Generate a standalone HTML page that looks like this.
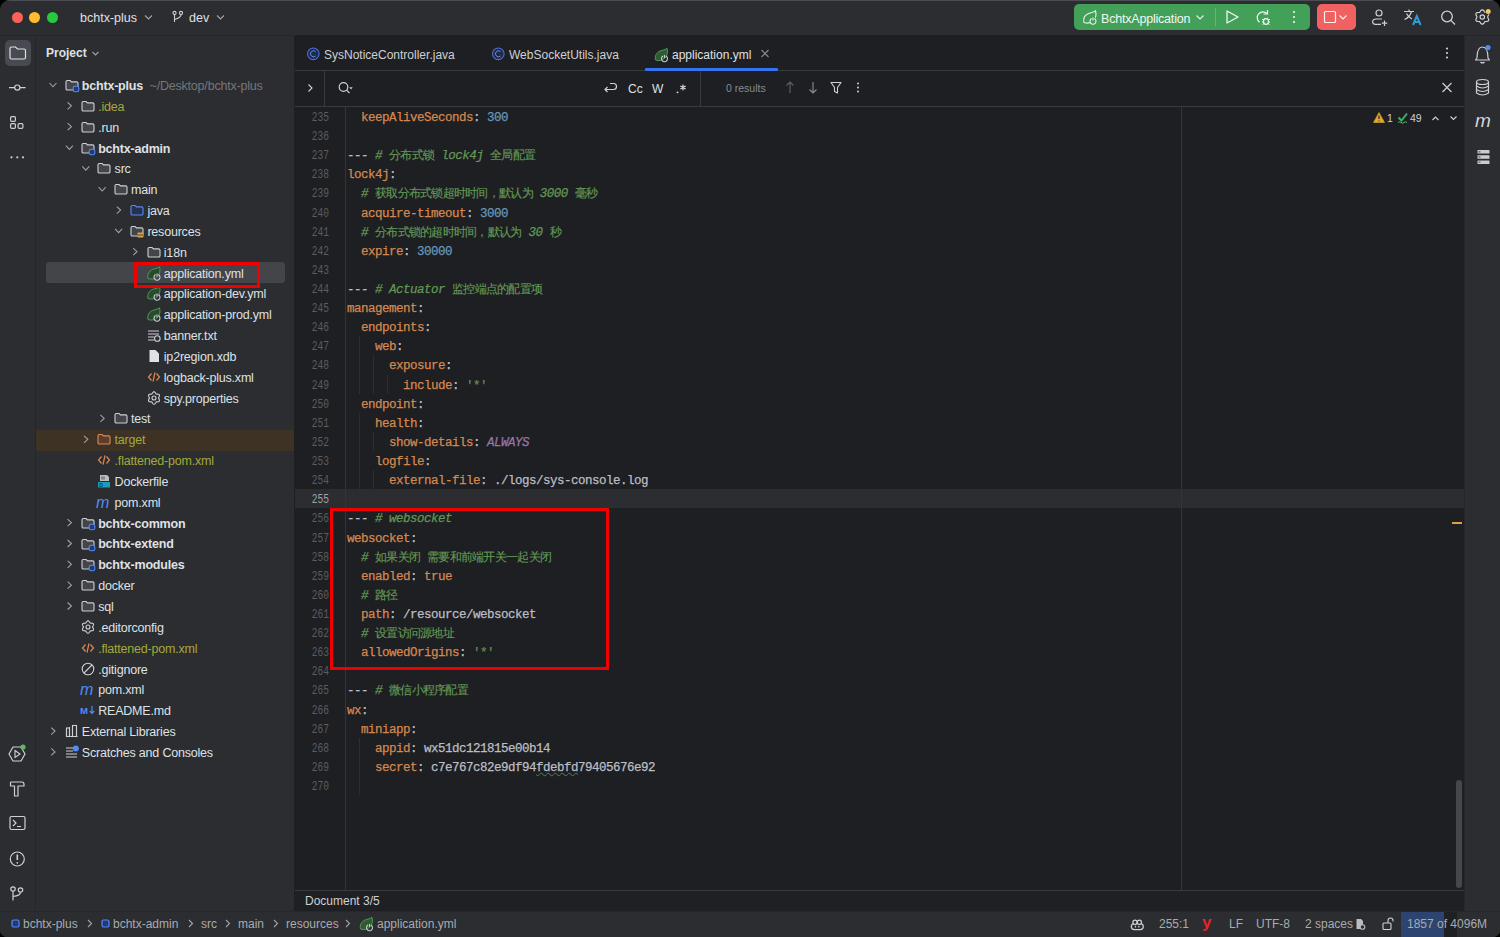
<!DOCTYPE html>
<html><head><meta charset="utf-8">
<style>
*{box-sizing:border-box;margin:0;padding:0}
html,body{width:1500px;height:937px;overflow:hidden;background:#000}
body{font-family:"Liberation Sans",sans-serif;color:#DFE1E5;font-size:13px;position:relative}
.a{position:absolute}
svg{position:absolute;overflow:visible}
#win{position:absolute;left:0;top:0;width:1500px;height:937px;background:#2B2D30;border-radius:10px 10px 7px 7px;overflow:hidden}
#title{left:0;top:0;width:1500px;height:35px;background:#2B2D30}
#lstrip{left:0;top:35px;width:36px;height:876px;background:#2B2D30;border-right:1px solid #25272A}
#proj{left:36px;top:35px;width:259px;height:876px;background:#2B2D30;border-right:1px solid #1E1F22}
#editor{left:295px;top:35px;width:1169px;height:855px;background:#1E1F22;overflow:hidden}
#docbar{left:295px;top:890px;width:1169px;height:21px;background:#1F2023;border-top:1px solid #393B40}
#rstrip{left:1464px;top:35px;width:36px;height:876px;background:#2B2D30;border-left:1px solid #25272A}
#status{left:0;top:911px;width:1500px;height:26px;background:#2B2D30;border-top:1px solid #25272A}
.ln{position:absolute;left:-66px;width:100px;text-align:right;font-family:"Liberation Mono",monospace;font-size:12px;letter-spacing:0;line-height:19.11px;color:#5A5D63;padding-top:2px;transform:scaleX(0.8);transform-origin:100% 50%}
.ln.cur{color:#A1A3AB}
.cl{position:absolute;left:52px;font-family:"Liberation Mono",monospace;font-size:12.5px;letter-spacing:-0.5px;line-height:19.11px;white-space:pre;padding-top:2px;-webkit-text-stroke:0.25px currentColor}
.zh{font-style:normal;font-size:12px;letter-spacing:-0.73px;-webkit-text-stroke:0.15px currentColor}
.it{font-style:italic}
.ul{text-decoration:underline wavy #5E7A4A;text-decoration-thickness:1px;text-underline-offset:1px}
.t{position:absolute;white-space:nowrap;line-height:16px}
.tr{position:absolute;white-space:nowrap;line-height:21px;height:21px;font-size:12.5px;letter-spacing:-0.2px;color:#DFE1E5}
.b{font-weight:bold}
</style></head><body>
<div id="win">
<div class="a" style="left:0;top:0;width:1500px;height:1px;background:#4B4D52;z-index:5"></div>
<div id="title" class="a">
  <div class="a" style="left:11.8px;top:11.5px;width:11px;height:11px;border-radius:50%;background:#FF5F57"></div>
  <div class="a" style="left:29.2px;top:11.5px;width:11px;height:11px;border-radius:50%;background:#FEBC2E"></div>
  <div class="a" style="left:46.5px;top:11.5px;width:11px;height:11px;border-radius:50%;background:#28C840"></div>
  <div class="t" style="left:80px;top:10px;font-size:12.5px;color:#DFE1E5">bchtx-plus</div>
  <svg width="1" height="1" style="left:0;top:0"><path d="M145 15.5 L148.5 19 L152 15.5" fill="none" stroke="#9FA2A8" stroke-width="1.1"/>
   <circle cx="174.5" cy="13" r="1.6" fill="none" stroke="#CED0D6" stroke-width="1.1"/><circle cx="181" cy="13" r="1.6" fill="none" stroke="#CED0D6" stroke-width="1.1"/>
   <path d="M174.5 14.6 V22 M181 14.6 Q181 18 174.5 19.5" fill="none" stroke="#CED0D6" stroke-width="1.1"/>
   <path d="M217 15.5 L220.5 19 L224 15.5" fill="none" stroke="#9FA2A8" stroke-width="1.1"/></svg>
  <div class="t" style="left:189px;top:10px;font-size:12.5px;color:#DFE1E5">dev</div>
  <div class="a" style="left:1074px;top:4px;width:236px;height:26px;border-radius:5px;background:#43A059"></div>
  <div class="a" style="left:1215px;top:8px;width:1px;height:18px;background:#68B57A"></div>
  <svg width="1" height="1" style="left:0;top:0">
   <g transform="translate(1083,10)"><path d="M1 12.5 C0 8.5 2 5 5.5 3.5 C8 2.5 10.5 2.5 12.5 0.8 C13.5 4.5 13 8 10.5 10.5 C8 13 4.5 13.8 1 12.5 Z" fill="none" stroke="#EAF4EC" stroke-width="1.1"/><circle cx="10" cy="10.5" r="3.4" fill="#43A059"/><path d="M8.6 8.6 A3 3 0 1 0 11.4 8.6" fill="none" stroke="#EAF4EC" stroke-width="1.1"/><line x1="10" y1="7.4" x2="10" y2="10.4" stroke="#EAF4EC" stroke-width="1.1"/></g>
   <path d="M1196.5 15.5 L1200 19 L1203.5 15.5" fill="none" stroke="#E6F2E8" stroke-width="1.1"/>
   <path d="M1227 11 L1238 17 L1227 23 Z" fill="none" stroke="#F2F7F3" stroke-width="1.3" stroke-linejoin="round"/>
   <path d="M1267.5 14 A5.8 5.8 0 1 0 1259.5 22.3" fill="none" stroke="#F2F7F3" stroke-width="1.2"/><path d="M1267.5 10 V14 H1263.5" fill="none" stroke="#F2F7F3" stroke-width="1.2"/>
   <ellipse cx="1266" cy="21.5" rx="2.5" ry="2.8" fill="#43A059" stroke="#F2F7F3" stroke-width="1.2"/>
   <path d="M1262 19.5 H1263.5 M1268.5 19.5 H1270 M1262 22 H1263.5 M1268.5 22 H1270 M1262.5 24.5 L1264 23.5 M1269.5 24.5 L1268 23.5 M1264.5 18 L1265.3 18.8 M1267.5 18 L1266.7 18.8" stroke="#F2F7F3" stroke-width="1"/>
   <circle cx="1294" cy="12" r="1.1" fill="#F2F7F3"/><circle cx="1294" cy="17" r="1.1" fill="#F2F7F3"/><circle cx="1294" cy="22" r="1.1" fill="#F2F7F3"/>
  </svg>
  <div class="t" style="left:1101px;top:10.5px;font-size:12.5px;color:#F2F7F3;letter-spacing:-0.2px">BchtxApplication</div>
  <div class="a" style="left:1317px;top:4px;width:39px;height:26px;border-radius:5px;background:#F06262"></div>
  <svg width="1" height="1" style="left:0;top:0">
   <rect x="1324.5" y="11.5" width="11" height="11" rx="1" fill="none" stroke="#FFF0F0" stroke-width="1.2"/>
   <path d="M1339.5 15.5 L1343 19 L1346.5 15.5" fill="none" stroke="#FFF0F0" stroke-width="1.1"/>
   <!-- person add -->
   <circle cx="1379" cy="13" r="3" fill="none" stroke="#CED0D6" stroke-width="1.2"/>
   <path d="M1382 19 H1376.5 Q1372.6 19 1372.6 21.8 Q1372.6 24.3 1375.5 24.3 H1381" fill="none" stroke="#CED0D6" stroke-width="1.2"/>
   <path d="M1384.5 20.5 V26 M1381.8 23.2 H1387.2" stroke="#CED0D6" stroke-width="1.2"/>
   <!-- translate -->
   <path d="M1404 11.5 H1414 M1409 9.5 V11.5 M1411.5 11.5 Q1410 17 1404.5 19.5 M1406.5 13.5 Q1408.5 17.5 1412 19" fill="none" stroke="#CED0D6" stroke-width="1.2"/>
   <path d="M1413 25 L1416.8 16 L1420.6 25 M1414.4 22 H1419.2" fill="none" stroke="#2F9BD6" stroke-width="2"/>
   <!-- search -->
   <circle cx="1447" cy="16.5" r="5.3" fill="none" stroke="#CED0D6" stroke-width="1.3"/><path d="M1450.9 20.4 L1455 24.5" stroke="#CED0D6" stroke-width="1.3"/>
   <!-- settings -->
   <circle cx="1482.3" cy="17" r="2.2" fill="none" stroke="#CED0D6" stroke-width="1.2"/>
   <path d="M1482.30 9.80 L1482.77 9.88 L1483.21 10.12 L1483.60 10.48 L1483.93 10.91 L1484.21 11.36 L1484.47 11.77 L1484.72 12.10 L1485.00 12.32 L1485.34 12.45 L1485.75 12.51 L1486.23 12.52 L1486.75 12.55 L1487.30 12.62 L1487.80 12.78 L1488.23 13.04 L1488.54 13.40 L1488.70 13.85 L1488.71 14.35 L1488.59 14.86 L1488.39 15.37 L1488.14 15.84 L1487.92 16.26 L1487.76 16.64 L1487.70 17.00 L1487.76 17.36 L1487.92 17.74 L1488.14 18.16 L1488.39 18.63 L1488.59 19.14 L1488.71 19.65 L1488.70 20.15 L1488.54 20.60 L1488.23 20.96 L1487.80 21.22 L1487.30 21.38 L1486.75 21.45 L1486.23 21.48 L1485.75 21.49 L1485.34 21.55 L1485.00 21.68 L1484.72 21.90 L1484.47 22.23 L1484.21 22.64 L1483.93 23.09 L1483.60 23.52 L1483.21 23.88 L1482.77 24.12 L1482.30 24.20 L1481.83 24.12 L1481.39 23.88 L1481.00 23.52 L1480.67 23.09 L1480.39 22.64 L1480.13 22.23 L1479.88 21.90 L1479.60 21.68 L1479.26 21.55 L1478.85 21.49 L1478.37 21.48 L1477.85 21.45 L1477.30 21.38 L1476.80 21.22 L1476.37 20.96 L1476.06 20.60 L1475.90 20.15 L1475.89 19.65 L1476.01 19.14 L1476.21 18.63 L1476.46 18.16 L1476.68 17.74 L1476.84 17.36 L1476.90 17.00 L1476.84 16.64 L1476.68 16.26 L1476.46 15.84 L1476.21 15.37 L1476.01 14.86 L1475.89 14.35 L1475.90 13.85 L1476.06 13.40 L1476.37 13.04 L1476.80 12.78 L1477.30 12.62 L1477.85 12.55 L1478.37 12.52 L1478.85 12.51 L1479.26 12.45 L1479.60 12.32 L1479.88 12.10 L1480.13 11.77 L1480.39 11.36 L1480.67 10.91 L1481.00 10.48 L1481.39 10.12 L1481.83 9.88 Z" fill="none" stroke="#CED0D6" stroke-width="1.2" stroke-linejoin="round"/>
   <circle cx="1488.2" cy="11.5" r="3" fill="#2B2D30"/><circle cx="1488.2" cy="11.5" r="2.5" fill="#F2C55C"/>
  </svg>
</div>
<div id="lstrip" class="a">
  <div class="a" style="left:4.5px;top:4.5px;width:26px;height:26px;border-radius:5px;background:#474A50"></div>
  <svg width="1" height="1" style="left:0;top:0">
   <path d="M10 13.5 Q10 12 11.5 12 H15.5 L17.5 14 H24 Q25.5 14 25.5 15.5 V22.5 Q25.5 24 24 24 H11.5 Q10 24 10 22.5 Z" fill="none" stroke="#DFE1E5" stroke-width="1.2"/>
   <circle cx="17.3" cy="52.6" r="2.6" fill="none" stroke="#CED0D6" stroke-width="1.2"/><path d="M9 52.6 H14.7 M19.9 52.6 H25.6" stroke="#CED0D6" stroke-width="1.2"/>
   <rect x="10.6" y="81.6" width="4.8" height="4.8" rx="1.2" fill="none" stroke="#CED0D6" stroke-width="1.2"/>
   <rect x="10.6" y="88.6" width="4.8" height="4.8" rx="1.2" fill="none" stroke="#CED0D6" stroke-width="1.2"/>
   <rect x="18.1" y="88.6" width="4.8" height="4.8" rx="1.2" fill="none" stroke="#CED0D6" stroke-width="1.2"/>
   <circle cx="11.5" cy="122.3" r="1.1" fill="#CED0D6"/><circle cx="17.3" cy="122.3" r="1.1" fill="#CED0D6"/><circle cx="23" cy="122.3" r="1.1" fill="#CED0D6"/>
   <!-- services -->
   <path d="M13 712 L21 712 L25 719 L21 726 L13 726 L9 719 Z" fill="none" stroke="#CED0D6" stroke-width="1.2" stroke-linejoin="round"/>
   <path d="M15 715.5 L20 719 L15 722.5 Z" fill="none" stroke="#CED0D6" stroke-width="1.1"/>
   <circle cx="23" cy="712" r="2.6" fill="#5FB865"/>
   <!-- build hammer -->
   <path d="M10.5 747 H22 Q24 747 24 749.5 V751 H20 M10.5 747 V751 H14.5 V761 H18 V751 H20" fill="none" stroke="#CED0D6" stroke-width="1.2" stroke-linejoin="round"/>
   <!-- terminal -->
   <rect x="10" y="781.5" width="15" height="13" rx="1.5" fill="none" stroke="#CED0D6" stroke-width="1.2"/>
   <path d="M13 785 L16 788 L13 791 M17 791.5 H21" fill="none" stroke="#CED0D6" stroke-width="1.2"/>
   <!-- problems -->
   <circle cx="17.3" cy="824" r="7" fill="none" stroke="#CED0D6" stroke-width="1.2"/><path d="M17.3 819.5 V825" stroke="#CED0D6" stroke-width="1.6"/><circle cx="17.3" cy="827.8" r="0.9" fill="#CED0D6"/>
   <!-- git -->
   <circle cx="13" cy="854" r="2.2" fill="none" stroke="#CED0D6" stroke-width="1.2"/><circle cx="20.5" cy="855" r="2.2" fill="none" stroke="#CED0D6" stroke-width="1.2"/>
   <path d="M13 856.2 V865.5 M20.5 857.2 Q20.5 860.5 13 861.5" fill="none" stroke="#CED0D6" stroke-width="1.2"/>
  </svg>
</div>
<div id="proj" class="a">
  <div class="t b" style="left:10px;top:10px;font-size:12px">Project</div>
  <svg width="1" height="1" style="left:0;top:0"><path d="M56.5 17 L59.5 20 L62.5 17" fill="none" stroke="#9FA2A8" stroke-width="1.1"/></svg>
  <div class="a" style="left:10px;top:227px;width:239px;height:21px;border-radius:3px;background:#43454A"></div>
  <div class="a" style="left:0;top:395px;width:258px;height:21px;background:#3D3223"></div>
<svg width="1" height="1" style="left:0;top:0"><path d="M13.50 48.00 L17.00 51.80 L20.50 48.00" fill="none" stroke="#9FA2A8" stroke-width="1.1"/></svg>
<svg width="14" height="14" style="left:28.5px;top:43.0px"><g transform="translate(0.5,2)"><path d="M0.5 1.8 Q0.5 0.5 1.8 0.5 H4.6 L6 1.9 H11.2 Q12.5 1.9 12.5 3.2 V8.7 Q12.5 10 11.2 10 H1.8 Q0.5 10 0.5 8.7 Z" fill="#43454A" stroke="#CED0D6" stroke-width="1.1"/></g><rect x="8.2" y="8.2" width="5.6" height="5.6" rx="1.8" fill="#233B6E" stroke="#548AF7" stroke-width="1.1"/></svg>
<div class="tr" style="left:45.8px;top:41.00px;color:#DFE1E5;font-weight:bold">bchtx-plus<span style="color:#74777E;font-weight:normal">&nbsp; ~/Desktop/bchtx-plus</span></div>
<svg width="1" height="1" style="left:0;top:0"><path d="M31.60 67.34 L35.40 70.84 L31.60 74.34" fill="none" stroke="#9FA2A8" stroke-width="1.1"/></svg>
<svg width="14" height="14" style="left:44.9px;top:63.8px"><g transform="translate(0.5,2)"><path d="M0.5 1.8 Q0.5 0.5 1.8 0.5 H4.6 L6 1.9 H11.2 Q12.5 1.9 12.5 3.2 V8.7 Q12.5 10 11.2 10 H1.8 Q0.5 10 0.5 8.7 Z" fill="#43454A" stroke="#CED0D6" stroke-width="1.1"/></g></svg>
<div class="tr" style="left:62.2px;top:61.84px;color:#A4AA3A">.idea</div>
<svg width="1" height="1" style="left:0;top:0"><path d="M31.60 88.18 L35.40 91.68 L31.60 95.18" fill="none" stroke="#9FA2A8" stroke-width="1.1"/></svg>
<svg width="14" height="14" style="left:44.9px;top:84.7px"><g transform="translate(0.5,2)"><path d="M0.5 1.8 Q0.5 0.5 1.8 0.5 H4.6 L6 1.9 H11.2 Q12.5 1.9 12.5 3.2 V8.7 Q12.5 10 11.2 10 H1.8 Q0.5 10 0.5 8.7 Z" fill="#43454A" stroke="#CED0D6" stroke-width="1.1"/></g></svg>
<div class="tr" style="left:62.2px;top:82.68px;color:#DFE1E5">.run</div>
<svg width="1" height="1" style="left:0;top:0"><path d="M29.90 110.52 L33.40 114.32 L36.90 110.52" fill="none" stroke="#9FA2A8" stroke-width="1.1"/></svg>
<svg width="14" height="14" style="left:44.9px;top:105.5px"><g transform="translate(0.5,2)"><path d="M0.5 1.8 Q0.5 0.5 1.8 0.5 H4.6 L6 1.9 H11.2 Q12.5 1.9 12.5 3.2 V8.7 Q12.5 10 11.2 10 H1.8 Q0.5 10 0.5 8.7 Z" fill="#43454A" stroke="#CED0D6" stroke-width="1.1"/></g><rect x="8.2" y="8.2" width="5.6" height="5.6" rx="1.8" fill="#233B6E" stroke="#548AF7" stroke-width="1.1"/></svg>
<div class="tr" style="left:62.2px;top:103.52px;color:#DFE1E5;font-weight:bold">bchtx-admin</div>
<svg width="1" height="1" style="left:0;top:0"><path d="M46.30 131.36 L49.80 135.16 L53.30 131.36" fill="none" stroke="#9FA2A8" stroke-width="1.1"/></svg>
<svg width="14" height="14" style="left:61.3px;top:126.4px"><g transform="translate(0.5,2)"><path d="M0.5 1.8 Q0.5 0.5 1.8 0.5 H4.6 L6 1.9 H11.2 Q12.5 1.9 12.5 3.2 V8.7 Q12.5 10 11.2 10 H1.8 Q0.5 10 0.5 8.7 Z" fill="#43454A" stroke="#CED0D6" stroke-width="1.1"/></g></svg>
<div class="tr" style="left:78.6px;top:124.36px;color:#DFE1E5">src</div>
<svg width="1" height="1" style="left:0;top:0"><path d="M62.70 152.20 L66.20 156.00 L69.70 152.20" fill="none" stroke="#9FA2A8" stroke-width="1.1"/></svg>
<svg width="14" height="14" style="left:77.7px;top:147.2px"><g transform="translate(0.5,2)"><path d="M0.5 1.8 Q0.5 0.5 1.8 0.5 H4.6 L6 1.9 H11.2 Q12.5 1.9 12.5 3.2 V8.7 Q12.5 10 11.2 10 H1.8 Q0.5 10 0.5 8.7 Z" fill="#43454A" stroke="#CED0D6" stroke-width="1.1"/></g></svg>
<div class="tr" style="left:95.0px;top:145.20px;color:#DFE1E5">main</div>
<svg width="1" height="1" style="left:0;top:0"><path d="M80.80 171.54 L84.60 175.04 L80.80 178.54" fill="none" stroke="#9FA2A8" stroke-width="1.1"/></svg>
<svg width="14" height="14" style="left:94.1px;top:168.0px"><g transform="translate(0.5,2)"><path d="M0.5 1.8 Q0.5 0.5 1.8 0.5 H4.6 L6 1.9 H11.2 Q12.5 1.9 12.5 3.2 V8.7 Q12.5 10 11.2 10 H1.8 Q0.5 10 0.5 8.7 Z" fill="#25324D" stroke="#548AF7" stroke-width="1.1"/></g></svg>
<div class="tr" style="left:111.4px;top:166.04px;color:#DFE1E5">java</div>
<svg width="1" height="1" style="left:0;top:0"><path d="M79.10 193.88 L82.60 197.68 L86.10 193.88" fill="none" stroke="#9FA2A8" stroke-width="1.1"/></svg>
<svg width="14" height="14" style="left:94.1px;top:188.9px"><g transform="translate(0.5,2)"><path d="M0.5 1.8 Q0.5 0.5 1.8 0.5 H4.6 L6 1.9 H11.2 Q12.5 1.9 12.5 3.2 V8.7 Q12.5 10 11.2 10 H1.8 Q0.5 10 0.5 8.7 Z" fill="#43454A" stroke="#CED0D6" stroke-width="1.1"/></g><rect x="7.5" y="8.5" width="6" height="5" rx="0.8" fill="#D9A343"/><line x1="7.5" y1="11" x2="13.5" y2="11" stroke="#2B2D30" stroke-width="0.8"/></svg>
<div class="tr" style="left:111.4px;top:186.88px;color:#DFE1E5">resources</div>
<svg width="1" height="1" style="left:0;top:0"><path d="M97.20 213.22 L101.00 216.72 L97.20 220.22" fill="none" stroke="#9FA2A8" stroke-width="1.1"/></svg>
<svg width="14" height="14" style="left:110.5px;top:209.7px"><g transform="translate(0.5,2)"><path d="M0.5 1.8 Q0.5 0.5 1.8 0.5 H4.6 L6 1.9 H11.2 Q12.5 1.9 12.5 3.2 V8.7 Q12.5 10 11.2 10 H1.8 Q0.5 10 0.5 8.7 Z" fill="#43454A" stroke="#CED0D6" stroke-width="1.1"/></g></svg>
<div class="tr" style="left:127.8px;top:207.72px;color:#DFE1E5">i18n</div>
<svg width="14" height="14" style="left:110.5px;top:230.6px"><path d="M1 12.5 C0 8.5 2 5 5.5 3.5 C8 2.5 10.5 2.5 12.5 0.8 C13.5 4.5 13 8 10.5 10.5 C8 13 4.5 13.8 1 12.5 Z" fill="#2A4A2E" stroke="#4E9A57" stroke-width="1"/><path d="M8.6 8.6 A3 3 0 1 0 11.4 8.6" fill="none" stroke="#C9CCD2" stroke-width="1.1"/><line x1="10" y1="7.4" x2="10" y2="10.4" stroke="#C9CCD2" stroke-width="1.1"/></svg>
<div class="tr" style="left:127.8px;top:228.56px;color:#DFE1E5">application.yml</div>
<svg width="14" height="14" style="left:110.5px;top:251.4px"><path d="M1 12.5 C0 8.5 2 5 5.5 3.5 C8 2.5 10.5 2.5 12.5 0.8 C13.5 4.5 13 8 10.5 10.5 C8 13 4.5 13.8 1 12.5 Z" fill="#2A4A2E" stroke="#4E9A57" stroke-width="1"/><path d="M8.6 8.6 A3 3 0 1 0 11.4 8.6" fill="none" stroke="#C9CCD2" stroke-width="1.1"/><line x1="10" y1="7.4" x2="10" y2="10.4" stroke="#C9CCD2" stroke-width="1.1"/></svg>
<div class="tr" style="left:127.8px;top:249.40px;color:#DFE1E5">application-dev.yml</div>
<svg width="14" height="14" style="left:110.5px;top:272.2px"><path d="M1 12.5 C0 8.5 2 5 5.5 3.5 C8 2.5 10.5 2.5 12.5 0.8 C13.5 4.5 13 8 10.5 10.5 C8 13 4.5 13.8 1 12.5 Z" fill="#2A4A2E" stroke="#4E9A57" stroke-width="1"/><path d="M8.6 8.6 A3 3 0 1 0 11.4 8.6" fill="none" stroke="#C9CCD2" stroke-width="1.1"/><line x1="10" y1="7.4" x2="10" y2="10.4" stroke="#C9CCD2" stroke-width="1.1"/></svg>
<div class="tr" style="left:127.8px;top:270.24px;color:#DFE1E5">application-prod.yml</div>
<svg width="14" height="14" style="left:110.5px;top:293.1px"><path d="M1 3 H12 M1 6 H12 M1 9 H7 M1 12 H7" stroke="#CED0D6" stroke-width="1.1"/><circle cx="10.3" cy="10.5" r="2.8" fill="#2B2D30" stroke="#CED0D6" stroke-width="1.1"/></svg>
<div class="tr" style="left:127.8px;top:291.08px;color:#DFE1E5">banner.txt</div>
<svg width="14" height="14" style="left:110.5px;top:313.9px"><path d="M2.5 1 H8.5 L12 4.5 V13 H2.5 Z" fill="#DFE1E5"/></svg>
<div class="tr" style="left:127.8px;top:311.92px;color:#DFE1E5">ip2region.xdb</div>
<svg width="14" height="14" style="left:110.5px;top:334.8px"><path d="M4.5 3.5 L1.5 7 L4.5 10.5 M9.5 3.5 L12.5 7 L9.5 10.5 M8 2.5 L6 11.5" fill="none" stroke="#E08855" stroke-width="1.2"/></svg>
<div class="tr" style="left:127.8px;top:332.76px;color:#DFE1E5">logback-plus.xml</div>
<svg width="14" height="14" style="left:110.5px;top:355.6px"><circle cx="7" cy="7" r="2" fill="none" stroke="#CED0D6" stroke-width="1.1"/><path d="M7.00 0.80 L7.40 0.87 L7.78 1.09 L8.11 1.40 L8.40 1.78 L8.64 2.18 L8.85 2.53 L9.06 2.82 L9.30 3.02 L9.59 3.12 L9.94 3.16 L10.36 3.17 L10.82 3.18 L11.29 3.24 L11.73 3.37 L12.10 3.59 L12.37 3.90 L12.51 4.28 L12.51 4.72 L12.40 5.17 L12.22 5.60 L12.00 6.01 L11.79 6.37 L11.65 6.70 L11.60 7.00 L11.65 7.30 L11.79 7.63 L12.00 7.99 L12.22 8.40 L12.40 8.83 L12.51 9.28 L12.51 9.72 L12.37 10.10 L12.10 10.41 L11.73 10.63 L11.29 10.76 L10.82 10.82 L10.36 10.83 L9.94 10.84 L9.59 10.88 L9.30 10.98 L9.06 11.18 L8.85 11.47 L8.64 11.82 L8.40 12.22 L8.11 12.60 L7.78 12.91 L7.40 13.13 L7.00 13.20 L6.60 13.13 L6.22 12.91 L5.89 12.60 L5.60 12.22 L5.36 11.82 L5.15 11.47 L4.94 11.18 L4.70 10.98 L4.41 10.88 L4.06 10.84 L3.64 10.83 L3.18 10.82 L2.71 10.76 L2.27 10.63 L1.90 10.41 L1.63 10.10 L1.49 9.72 L1.49 9.28 L1.60 8.83 L1.78 8.40 L2.00 7.99 L2.21 7.63 L2.35 7.30 L2.40 7.00 L2.35 6.70 L2.21 6.37 L2.00 6.01 L1.78 5.60 L1.60 5.17 L1.49 4.72 L1.49 4.28 L1.63 3.90 L1.90 3.59 L2.27 3.37 L2.71 3.24 L3.18 3.18 L3.64 3.17 L4.06 3.16 L4.41 3.12 L4.70 3.02 L4.94 2.82 L5.15 2.53 L5.36 2.18 L5.60 1.78 L5.89 1.40 L6.22 1.09 L6.60 0.87 Z" fill="none" stroke="#CED0D6" stroke-width="1.1"/></svg>
<div class="tr" style="left:127.8px;top:353.60px;color:#DFE1E5">spy.properties</div>
<svg width="1" height="1" style="left:0;top:0"><path d="M64.40 379.94 L68.20 383.44 L64.40 386.94" fill="none" stroke="#9FA2A8" stroke-width="1.1"/></svg>
<svg width="14" height="14" style="left:77.7px;top:376.4px"><g transform="translate(0.5,2)"><path d="M0.5 1.8 Q0.5 0.5 1.8 0.5 H4.6 L6 1.9 H11.2 Q12.5 1.9 12.5 3.2 V8.7 Q12.5 10 11.2 10 H1.8 Q0.5 10 0.5 8.7 Z" fill="#43454A" stroke="#CED0D6" stroke-width="1.1"/></g></svg>
<div class="tr" style="left:95.0px;top:374.44px;color:#DFE1E5">test</div>
<svg width="1" height="1" style="left:0;top:0"><path d="M48.00 400.78 L51.80 404.28 L48.00 407.78" fill="none" stroke="#9FA2A8" stroke-width="1.1"/></svg>
<svg width="14" height="14" style="left:61.3px;top:397.3px"><g transform="translate(0.5,2)"><path d="M0.5 1.8 Q0.5 0.5 1.8 0.5 H4.6 L6 1.9 H11.2 Q12.5 1.9 12.5 3.2 V8.7 Q12.5 10 11.2 10 H1.8 Q0.5 10 0.5 8.7 Z" fill="#5A3D2B" stroke="#E08855" stroke-width="1.1"/></g></svg>
<div class="tr" style="left:78.6px;top:395.28px;color:#A4AA3A">target</div>
<svg width="14" height="14" style="left:61.3px;top:418.1px"><path d="M4.5 3.5 L1.5 7 L4.5 10.5 M9.5 3.5 L12.5 7 L9.5 10.5 M8 2.5 L6 11.5" fill="none" stroke="#E08855" stroke-width="1.2"/></svg>
<div class="tr" style="left:78.6px;top:416.12px;color:#A4AA3A">.flattened-pom.xml</div>
<svg width="14" height="14" style="left:61.3px;top:439.0px"><path d="M3 1 H10 L12 3 V7 H3 Z" fill="#B9BCC2"/><path d="M5 2.5 V5.5 M7 2.5 V5.5" stroke="#2B2D30" stroke-width="0.8"/><path d="M1 8 H13 V13.5 H1 Z" fill="#1E9BB8"/><text x="2.2" y="12.8" font-size="5" fill="#0B3B4A" font-family="Liberation Sans" font-weight="bold">D</text></svg>
<div class="tr" style="left:78.6px;top:436.96px;color:#DFE1E5">Dockerfile</div>
<svg width="14" height="14" style="left:61.3px;top:459.8px"><text x="-1" y="12.5" font-size="16" fill="#548AF7" font-family="Liberation Sans" font-style="italic">m</text></svg>
<div class="tr" style="left:78.6px;top:457.80px;color:#DFE1E5">pom.xml</div>
<svg width="1" height="1" style="left:0;top:0"><path d="M31.60 484.14 L35.40 487.64 L31.60 491.14" fill="none" stroke="#9FA2A8" stroke-width="1.1"/></svg>
<svg width="14" height="14" style="left:44.9px;top:480.6px"><g transform="translate(0.5,2)"><path d="M0.5 1.8 Q0.5 0.5 1.8 0.5 H4.6 L6 1.9 H11.2 Q12.5 1.9 12.5 3.2 V8.7 Q12.5 10 11.2 10 H1.8 Q0.5 10 0.5 8.7 Z" fill="#43454A" stroke="#CED0D6" stroke-width="1.1"/></g><rect x="8.2" y="8.2" width="5.6" height="5.6" rx="1.8" fill="#233B6E" stroke="#548AF7" stroke-width="1.1"/></svg>
<div class="tr" style="left:62.2px;top:478.64px;color:#DFE1E5;font-weight:bold">bchtx-common</div>
<svg width="1" height="1" style="left:0;top:0"><path d="M31.60 504.98 L35.40 508.48 L31.60 511.98" fill="none" stroke="#9FA2A8" stroke-width="1.1"/></svg>
<svg width="14" height="14" style="left:44.9px;top:501.5px"><g transform="translate(0.5,2)"><path d="M0.5 1.8 Q0.5 0.5 1.8 0.5 H4.6 L6 1.9 H11.2 Q12.5 1.9 12.5 3.2 V8.7 Q12.5 10 11.2 10 H1.8 Q0.5 10 0.5 8.7 Z" fill="#43454A" stroke="#CED0D6" stroke-width="1.1"/></g><rect x="8.2" y="8.2" width="5.6" height="5.6" rx="1.8" fill="#233B6E" stroke="#548AF7" stroke-width="1.1"/></svg>
<div class="tr" style="left:62.2px;top:499.48px;color:#DFE1E5;font-weight:bold">bchtx-extend</div>
<svg width="1" height="1" style="left:0;top:0"><path d="M31.60 525.82 L35.40 529.32 L31.60 532.82" fill="none" stroke="#9FA2A8" stroke-width="1.1"/></svg>
<svg width="14" height="14" style="left:44.9px;top:522.3px"><g transform="translate(0.5,2)"><path d="M0.5 1.8 Q0.5 0.5 1.8 0.5 H4.6 L6 1.9 H11.2 Q12.5 1.9 12.5 3.2 V8.7 Q12.5 10 11.2 10 H1.8 Q0.5 10 0.5 8.7 Z" fill="#43454A" stroke="#CED0D6" stroke-width="1.1"/></g><rect x="8.2" y="8.2" width="5.6" height="5.6" rx="1.8" fill="#233B6E" stroke="#548AF7" stroke-width="1.1"/></svg>
<div class="tr" style="left:62.2px;top:520.32px;color:#DFE1E5;font-weight:bold">bchtx-modules</div>
<svg width="1" height="1" style="left:0;top:0"><path d="M31.60 546.66 L35.40 550.16 L31.60 553.66" fill="none" stroke="#9FA2A8" stroke-width="1.1"/></svg>
<svg width="14" height="14" style="left:44.9px;top:543.2px"><g transform="translate(0.5,2)"><path d="M0.5 1.8 Q0.5 0.5 1.8 0.5 H4.6 L6 1.9 H11.2 Q12.5 1.9 12.5 3.2 V8.7 Q12.5 10 11.2 10 H1.8 Q0.5 10 0.5 8.7 Z" fill="#43454A" stroke="#CED0D6" stroke-width="1.1"/></g></svg>
<div class="tr" style="left:62.2px;top:541.16px;color:#DFE1E5">docker</div>
<svg width="1" height="1" style="left:0;top:0"><path d="M31.60 567.50 L35.40 571.00 L31.60 574.50" fill="none" stroke="#9FA2A8" stroke-width="1.1"/></svg>
<svg width="14" height="14" style="left:44.9px;top:564.0px"><g transform="translate(0.5,2)"><path d="M0.5 1.8 Q0.5 0.5 1.8 0.5 H4.6 L6 1.9 H11.2 Q12.5 1.9 12.5 3.2 V8.7 Q12.5 10 11.2 10 H1.8 Q0.5 10 0.5 8.7 Z" fill="#43454A" stroke="#CED0D6" stroke-width="1.1"/></g></svg>
<div class="tr" style="left:62.2px;top:562.00px;color:#DFE1E5">sql</div>
<svg width="14" height="14" style="left:44.9px;top:584.8px"><circle cx="7" cy="7" r="2" fill="none" stroke="#CED0D6" stroke-width="1.1"/><path d="M7.00 0.80 L7.40 0.87 L7.78 1.09 L8.11 1.40 L8.40 1.78 L8.64 2.18 L8.85 2.53 L9.06 2.82 L9.30 3.02 L9.59 3.12 L9.94 3.16 L10.36 3.17 L10.82 3.18 L11.29 3.24 L11.73 3.37 L12.10 3.59 L12.37 3.90 L12.51 4.28 L12.51 4.72 L12.40 5.17 L12.22 5.60 L12.00 6.01 L11.79 6.37 L11.65 6.70 L11.60 7.00 L11.65 7.30 L11.79 7.63 L12.00 7.99 L12.22 8.40 L12.40 8.83 L12.51 9.28 L12.51 9.72 L12.37 10.10 L12.10 10.41 L11.73 10.63 L11.29 10.76 L10.82 10.82 L10.36 10.83 L9.94 10.84 L9.59 10.88 L9.30 10.98 L9.06 11.18 L8.85 11.47 L8.64 11.82 L8.40 12.22 L8.11 12.60 L7.78 12.91 L7.40 13.13 L7.00 13.20 L6.60 13.13 L6.22 12.91 L5.89 12.60 L5.60 12.22 L5.36 11.82 L5.15 11.47 L4.94 11.18 L4.70 10.98 L4.41 10.88 L4.06 10.84 L3.64 10.83 L3.18 10.82 L2.71 10.76 L2.27 10.63 L1.90 10.41 L1.63 10.10 L1.49 9.72 L1.49 9.28 L1.60 8.83 L1.78 8.40 L2.00 7.99 L2.21 7.63 L2.35 7.30 L2.40 7.00 L2.35 6.70 L2.21 6.37 L2.00 6.01 L1.78 5.60 L1.60 5.17 L1.49 4.72 L1.49 4.28 L1.63 3.90 L1.90 3.59 L2.27 3.37 L2.71 3.24 L3.18 3.18 L3.64 3.17 L4.06 3.16 L4.41 3.12 L4.70 3.02 L4.94 2.82 L5.15 2.53 L5.36 2.18 L5.60 1.78 L5.89 1.40 L6.22 1.09 L6.60 0.87 Z" fill="none" stroke="#CED0D6" stroke-width="1.1"/></svg>
<div class="tr" style="left:62.2px;top:582.84px;color:#DFE1E5">.editorconfig</div>
<svg width="14" height="14" style="left:44.9px;top:605.7px"><path d="M4.5 3.5 L1.5 7 L4.5 10.5 M9.5 3.5 L12.5 7 L9.5 10.5 M8 2.5 L6 11.5" fill="none" stroke="#E08855" stroke-width="1.2"/></svg>
<div class="tr" style="left:62.2px;top:603.68px;color:#A4AA3A">.flattened-pom.xml</div>
<svg width="14" height="14" style="left:44.9px;top:626.5px"><circle cx="7" cy="7" r="5.8" fill="none" stroke="#CED0D6" stroke-width="1.1"/><line x1="3" y1="11" x2="11" y2="3" stroke="#CED0D6" stroke-width="1.1"/></svg>
<div class="tr" style="left:62.2px;top:624.52px;color:#DFE1E5">.gitignore</div>
<svg width="14" height="14" style="left:44.9px;top:647.4px"><text x="-1" y="12.5" font-size="16" fill="#548AF7" font-family="Liberation Sans" font-style="italic">m</text></svg>
<div class="tr" style="left:62.2px;top:645.36px;color:#DFE1E5">pom.xml</div>
<svg width="14" height="14" style="left:44.9px;top:668.2px"><text x="-1" y="11" font-size="9.5" fill="#548AF7" font-family="Liberation Sans" font-weight="bold">M</text><path d="M11 3 V10 M8.8 8 L11 10.3 L13.2 8" fill="none" stroke="#548AF7" stroke-width="1.2"/></svg>
<div class="tr" style="left:62.2px;top:666.20px;color:#DFE1E5">README.md</div>
<svg width="1" height="1" style="left:0;top:0"><path d="M15.20 692.54 L19.00 696.04 L15.20 699.54" fill="none" stroke="#9FA2A8" stroke-width="1.1"/></svg>
<svg width="14" height="14" style="left:28.5px;top:689.0px"><path d="M1.5 4 V12.5 H12.5 M4.5 3 V12.5 M7.5 1.5 V12.5 M11.5 4 V12.5" fill="none" stroke="#CED0D6" stroke-width="1.1"/><rect x="1.5" y="4" width="3" height="8.5" fill="none" stroke="#CED0D6" stroke-width="1.1"/><rect x="7.5" y="1.5" width="4" height="11" fill="none" stroke="#CED0D6" stroke-width="1.1"/></svg>
<div class="tr" style="left:45.8px;top:687.04px;color:#DFE1E5">External Libraries</div>
<svg width="1" height="1" style="left:0;top:0"><path d="M15.20 713.38 L19.00 716.88 L15.20 720.38" fill="none" stroke="#9FA2A8" stroke-width="1.1"/></svg>
<svg width="14" height="14" style="left:28.5px;top:709.9px"><path d="M1 3 H8 M1 6 H8 M1 9 H12 M1 12 H12" stroke="#CED0D6" stroke-width="1.1"/><circle cx="10.8" cy="3.5" r="3" fill="#548AF7"/></svg>
<div class="tr" style="left:45.8px;top:707.88px;color:#DFE1E5">Scratches and Consoles</div>
  <div class="a" style="left:98px;top:227px;width:126px;height:26px;border:3px solid #F00000"></div>
</div>
<div class="a" style="left:0;top:35px;width:295px;height:1px;background:#25272A;z-index:2"></div><div class="a" style="left:1464px;top:35px;width:36px;height:1px;background:#25272A;z-index:2"></div>
<div id="editor" class="a">
  <div class="a" style="left:0;top:35px;width:1170px;height:1px;background:#393B40"></div>
  <svg width="1" height="1" style="left:0;top:0">
   <circle cx="18.3" cy="18.8" r="5.8" fill="#1F2A48" stroke="#4B6FD6" stroke-width="1.1"/>
   <path d="M20.5 16.6 A3 3 0 1 0 20.5 21" fill="none" stroke="#6F8FE0" stroke-width="1"/>
   <circle cx="203.3" cy="18.8" r="5.8" fill="#1F2A48" stroke="#4B6FD6" stroke-width="1.1"/>
   <path d="M205.5 16.6 A3 3 0 1 0 205.5 21" fill="none" stroke="#6F8FE0" stroke-width="1"/>
   <g transform="translate(359.5,12.5)"><path d="M1 12.5 C0 8.5 2 5 5.5 3.5 C8 2.5 10.5 2.5 12.5 0.8 C13.5 4.5 13 8 10.5 10.5 C8 13 4.5 13.8 1 12.5 Z" fill="#2F5A33" stroke="#4E9A57" stroke-width="1"/><path d="M8.6 8.6 A3 3 0 1 0 11.4 8.6" fill="none" stroke="#C9CCD2" stroke-width="1.1"/><line x1="10" y1="7.4" x2="10" y2="10.4" stroke="#C9CCD2" stroke-width="1.1"/></g>
   <path d="M466.5 15 L473.5 22 M473.5 15 L466.5 22" stroke="#8C8F96" stroke-width="1.1"/>
   <circle cx="1152" cy="13.5" r="1.1" fill="#CED0D6"/><circle cx="1152" cy="18" r="1.1" fill="#CED0D6"/><circle cx="1152" cy="22.5" r="1.1" fill="#CED0D6"/>
  </svg>
  <div class="t" style="left:29px;top:11.5px;font-size:12px;color:#CED0D6">SysNoticeController.java</div>
  <div class="t" style="left:214px;top:11.5px;font-size:12px;color:#CED0D6">WebSocketUtils.java</div>
  <div class="t" style="left:377px;top:11.5px;font-size:12px;color:#DFE1E5">application.yml</div>
  <div class="a" style="left:350px;top:33px;width:133px;height:3px;border-radius:1px;background:#3574F0"></div>
  <!-- search bar -->
  <div class="a" style="left:29px;top:36px;width:1px;height:35px;background:#393B40"></div>
  <div class="a" style="left:405px;top:36px;width:1px;height:35px;background:#393B40"></div>
  <svg width="1" height="1" style="left:0;top:0">
   <path d="M13.5 49.5 L17 53 L13.5 56.5" fill="none" stroke="#CED0D6" stroke-width="1.1"/>
   <circle cx="48.5" cy="52" r="4.3" fill="none" stroke="#CED0D6" stroke-width="1.2"/><path d="M51.6 55.1 L54.5 58" stroke="#CED0D6" stroke-width="1.2"/>
   <path d="M54.3 52.3 L57.7 52.3 L56 54.5 Z" fill="#CED0D6"/>
   <path d="M315 48.5 H318.5 Q321.5 48.5 321.5 51.5 Q321.5 54.5 318.5 54.5 H310 M312.5 52 L310 54.5 L312.5 57" fill="none" stroke="#CED0D6" stroke-width="1.2"/>
   <path d="M495 47 V58 M491.5 50.5 L495 47 L498.5 50.5" fill="none" stroke="#5E6167" stroke-width="1.1"/>
   <path d="M518 47 V58 M514.5 54.5 L518 58 L521.5 54.5" fill="none" stroke="#8C8F96" stroke-width="1.1"/>
   <path d="M536 47.5 H546 L542.5 52.5 V58 L539.5 56.5 V52.5 Z" fill="none" stroke="#CED0D6" stroke-width="1.1" stroke-linejoin="round"/>
   <circle cx="563" cy="48.5" r="1" fill="#CED0D6"/><circle cx="563" cy="52.5" r="1" fill="#CED0D6"/><circle cx="563" cy="56.5" r="1" fill="#CED0D6"/>
   <path d="M1147.5 48 L1156.5 57 M1156.5 48 L1147.5 57" stroke="#CED0D6" stroke-width="1.2"/>
  </svg>
  <div class="t" style="left:333px;top:46px;font-size:12px;color:#DFE1E5">Cc</div>
  <div class="t" style="left:357px;top:46px;font-size:12px;color:#DFE1E5">W</div>
  <svg width="1" height="1" style="left:0;top:0"><circle cx="382.5" cy="57.3" r="0.9" fill="#DFE1E5"/><path d="M388 49.5 V55.5 M385.4 51 L390.6 54 M385.4 54 L390.6 51" stroke="#DFE1E5" stroke-width="1.1"/></svg>
  <div class="t" style="left:431px;top:45px;font-size:10.5px;color:#868A91">0 results</div>
  <!-- inspection widget -->
  <svg width="1" height="1" style="left:0;top:0">
   <path d="M1084 77.5 L1089.5 87.5 H1078.5 Z" fill="#E0A82E" stroke="#E0A82E" stroke-width="0.6" stroke-linejoin="round"/><path d="M1084 80.5 V84" stroke="#1E1F22" stroke-width="1.2"/><circle cx="1084" cy="85.8" r="0.6" fill="#1E1F22"/>
   <path d="M1103.5 82.5 L1106.5 85.5 L1112 78.5" fill="none" stroke="#3FAE6A" stroke-width="2"/>
   <path d="M1103 87.5 Q1104.5 86 1106 87.5 Q1107.5 89 1109 87.5 Q1110.5 86 1112 87.5" fill="none" stroke="#5FB865" stroke-width="1"/>
   <path d="M1137.5 85 L1140.5 82 L1143.5 85" fill="none" stroke="#CED0D6" stroke-width="1.1"/>
   <path d="M1155.5 81.5 L1158.5 84.5 L1161.5 81.5" fill="none" stroke="#CED0D6" stroke-width="1.1"/>
  </svg>
  <div class="t" style="left:1092px;top:75px;font-size:10.5px;color:#CED0D6">1</div>
  <div class="t" style="left:1115px;top:75px;font-size:10.5px;color:#CED0D6">49</div>
  <div class="a" style="left:1157px;top:487px;width:10px;height:2px;background:#D9A343"></div>
  <div class="a" style="left:1161px;top:745px;width:6px;height:108px;border-radius:3px;background:#45474B"></div>
  <div class="a" style="left:0;top:71px;width:1170px;height:1px;background:#393B40"></div>
  <div class="a" style="left:0;top:454.3px;width:1170px;height:18.9px;background:#2B2D31"></div>
  <div class="a" style="left:50px;top:72px;width:1px;height:800px;background:#313438"></div>
  <div class="a" style="left:886px;top:72px;width:1px;height:800px;background:#313438"></div>
<div class="a" style="left:64.0px;top:702.76px;width:1px;height:57.34px;background:#2C2E33"></div>
<div class="a" style="left:78.0px;top:435.17px;width:1px;height:19.11px;background:#2C2E33"></div>
<div class="a" style="left:78.0px;top:396.94px;width:1px;height:19.11px;background:#2C2E33"></div>
<div class="a" style="left:64.0px;top:377.82px;width:1px;height:76.46px;background:#2C2E33"></div>
<div class="a" style="left:92.0px;top:339.60px;width:1px;height:19.11px;background:#2C2E33"></div>
<div class="a" style="left:78.0px;top:320.48px;width:1px;height:38.23px;background:#2C2E33"></div>
<div class="a" style="left:64.0px;top:301.37px;width:1px;height:57.34px;background:#2C2E33"></div>
<div class="ln" style="top:72.00px">235</div>
<div class="cl" style="top:72.00px"><span style="color:#BCBEC4">  </span><span style="color:#D4884F">keepAliveSeconds</span><span style="color:#BCBEC4">: </span><span style="color:#6897BB">300</span></div>
<div class="ln" style="top:91.11px">236</div>
<div class="cl" style="top:91.11px"></div>
<div class="ln" style="top:110.23px">237</div>
<div class="cl" style="top:110.23px"><span style="color:#BCBEC4">--- </span><span style="color:#629755" class="it"># <span class="zh">分布式锁</span> lock4j <span class="zh">全局配置</span></span></div>
<div class="ln" style="top:129.34px">238</div>
<div class="cl" style="top:129.34px"><span style="color:#D4884F">lock4j</span><span style="color:#BCBEC4">:</span></div>
<div class="ln" style="top:148.46px">239</div>
<div class="cl" style="top:148.46px"><span style="color:#BCBEC4">  </span><span style="color:#629755" class="it"># <span class="zh">获取分布式锁超时时间，默认为</span> 3000 <span class="zh">毫秒</span></span></div>
<div class="ln" style="top:167.57px">240</div>
<div class="cl" style="top:167.57px"><span style="color:#BCBEC4">  </span><span style="color:#D4884F">acquire-timeout</span><span style="color:#BCBEC4">: </span><span style="color:#6897BB">3000</span></div>
<div class="ln" style="top:186.68px">241</div>
<div class="cl" style="top:186.68px"><span style="color:#BCBEC4">  </span><span style="color:#629755" class="it"># <span class="zh">分布式锁的超时时间，默认为</span> 30 <span class="zh">秒</span></span></div>
<div class="ln" style="top:205.80px">242</div>
<div class="cl" style="top:205.80px"><span style="color:#BCBEC4">  </span><span style="color:#D4884F">expire</span><span style="color:#BCBEC4">: </span><span style="color:#6897BB">30000</span></div>
<div class="ln" style="top:224.91px">243</div>
<div class="cl" style="top:224.91px"></div>
<div class="ln" style="top:244.03px">244</div>
<div class="cl" style="top:244.03px"><span style="color:#BCBEC4">--- </span><span style="color:#629755" class="it"># Actuator <span class="zh">监控端点的配置项</span></span></div>
<div class="ln" style="top:263.14px">245</div>
<div class="cl" style="top:263.14px"><span style="color:#D4884F">management</span><span style="color:#BCBEC4">:</span></div>
<div class="ln" style="top:282.25px">246</div>
<div class="cl" style="top:282.25px"><span style="color:#BCBEC4">  </span><span style="color:#D4884F">endpoints</span><span style="color:#BCBEC4">:</span></div>
<div class="ln" style="top:301.37px">247</div>
<div class="cl" style="top:301.37px"><span style="color:#BCBEC4">    </span><span style="color:#D4884F">web</span><span style="color:#BCBEC4">:</span></div>
<div class="ln" style="top:320.48px">248</div>
<div class="cl" style="top:320.48px"><span style="color:#BCBEC4">      </span><span style="color:#D4884F">exposure</span><span style="color:#BCBEC4">:</span></div>
<div class="ln" style="top:339.60px">249</div>
<div class="cl" style="top:339.60px"><span style="color:#BCBEC4">        </span><span style="color:#D4884F">include</span><span style="color:#BCBEC4">: </span><span style="color:#6A8759">&#x27;*&#x27;</span></div>
<div class="ln" style="top:358.71px">250</div>
<div class="cl" style="top:358.71px"><span style="color:#BCBEC4">  </span><span style="color:#D4884F">endpoint</span><span style="color:#BCBEC4">:</span></div>
<div class="ln" style="top:377.82px">251</div>
<div class="cl" style="top:377.82px"><span style="color:#BCBEC4">    </span><span style="color:#D4884F">health</span><span style="color:#BCBEC4">:</span></div>
<div class="ln" style="top:396.94px">252</div>
<div class="cl" style="top:396.94px"><span style="color:#BCBEC4">      </span><span style="color:#D4884F">show-details</span><span style="color:#BCBEC4">: </span><span style="color:#9876AA" class="it">ALWAYS</span></div>
<div class="ln" style="top:416.05px">253</div>
<div class="cl" style="top:416.05px"><span style="color:#BCBEC4">    </span><span style="color:#D4884F">logfile</span><span style="color:#BCBEC4">:</span></div>
<div class="ln" style="top:435.17px">254</div>
<div class="cl" style="top:435.17px"><span style="color:#BCBEC4">      </span><span style="color:#D4884F">external-file</span><span style="color:#BCBEC4">: </span><span style="color:#BCBEC4">./logs/sys-console.log</span></div>
<div class="ln cur" style="top:454.28px">255</div>
<div class="cl" style="top:454.28px"></div>
<div class="ln" style="top:473.39px">256</div>
<div class="cl" style="top:473.39px"><span style="color:#BCBEC4">--- </span><span style="color:#629755" class="it"># websocket</span></div>
<div class="ln" style="top:492.51px">257</div>
<div class="cl" style="top:492.51px"><span style="color:#D4884F">websocket</span><span style="color:#BCBEC4">:</span></div>
<div class="ln" style="top:511.62px">258</div>
<div class="cl" style="top:511.62px"><span style="color:#BCBEC4">  </span><span style="color:#629755" class="it"># <span class="zh">如果关闭</span> <span class="zh">需要和前端开关一起关闭</span></span></div>
<div class="ln" style="top:530.74px">259</div>
<div class="cl" style="top:530.74px"><span style="color:#BCBEC4">  </span><span style="color:#D4884F">enabled</span><span style="color:#BCBEC4">: </span><span style="color:#D4884F">true</span></div>
<div class="ln" style="top:549.85px">260</div>
<div class="cl" style="top:549.85px"><span style="color:#BCBEC4">  </span><span style="color:#629755" class="it"># <span class="zh">路径</span></span></div>
<div class="ln" style="top:568.96px">261</div>
<div class="cl" style="top:568.96px"><span style="color:#BCBEC4">  </span><span style="color:#D4884F">path</span><span style="color:#BCBEC4">: </span><span style="color:#BCBEC4">/resource/websocket</span></div>
<div class="ln" style="top:588.08px">262</div>
<div class="cl" style="top:588.08px"><span style="color:#BCBEC4">  </span><span style="color:#629755" class="it"># <span class="zh">设置访问源地址</span></span></div>
<div class="ln" style="top:607.19px">263</div>
<div class="cl" style="top:607.19px"><span style="color:#BCBEC4">  </span><span style="color:#D4884F">allowedOrigins</span><span style="color:#BCBEC4">: </span><span style="color:#6A8759">&#x27;*&#x27;</span></div>
<div class="ln" style="top:626.31px">264</div>
<div class="cl" style="top:626.31px"></div>
<div class="ln" style="top:645.42px">265</div>
<div class="cl" style="top:645.42px"><span style="color:#BCBEC4">--- </span><span style="color:#629755" class="it"># <span class="zh">微信小程序配置</span></span></div>
<div class="ln" style="top:664.53px">266</div>
<div class="cl" style="top:664.53px"><span style="color:#D4884F">wx</span><span style="color:#BCBEC4">:</span></div>
<div class="ln" style="top:683.65px">267</div>
<div class="cl" style="top:683.65px"><span style="color:#BCBEC4">  </span><span style="color:#D4884F">miniapp</span><span style="color:#BCBEC4">:</span></div>
<div class="ln" style="top:702.76px">268</div>
<div class="cl" style="top:702.76px"><span style="color:#BCBEC4">    </span><span style="color:#D4884F">appid</span><span style="color:#BCBEC4">: </span><span style="color:#BCBEC4">wx51dc121815e00b14</span></div>
<div class="ln" style="top:721.88px">269</div>
<div class="cl" style="top:721.88px"><span style="color:#BCBEC4">    </span><span style="color:#D4884F">secret</span><span style="color:#BCBEC4">: </span><span style="color:#BCBEC4">c7e767c82e9df94</span><span style="color:#BCBEC4" class="ul">fdebfd</span><span style="color:#BCBEC4">79405676e92</span></div>
<div class="ln" style="top:740.99px">270</div>
<div class="cl" style="top:740.99px"></div>
  <div class="a" style="left:35px;top:473px;width:279px;height:162px;border:3px solid #F00000"></div>
</div>
<div id="docbar" class="a"><div class="t" style="left:10px;top:2px;font-size:12px;color:#CED0D6">Document 3/5</div></div>
<div id="rstrip" class="a">
  <svg width="1" height="1" style="left:0;top:0">
   <path d="M12 23 Q12 12 17.5 12 Q23 12 23 23 L24.5 25 H10.5 Z" fill="none" stroke="#CED0D6" stroke-width="1.2" stroke-linejoin="round"/>
   <path d="M15.5 27 Q17.5 29 19.5 27" fill="none" stroke="#CED0D6" stroke-width="1.2"/>
   <circle cx="23" cy="12.5" r="2.6" fill="#548AF7"/>
   <ellipse cx="17.5" cy="47" rx="6" ry="2.5" fill="none" stroke="#CED0D6" stroke-width="1.2"/>
   <path d="M11.5 47 V58 Q17.5 62 23.5 58 V47 M11.5 51 Q17.5 55 23.5 51 M11.5 54.5 Q17.5 58.5 23.5 54.5" fill="none" stroke="#CED0D6" stroke-width="1.2"/>
   <rect x="12.5" y="115" width="12" height="3.6" rx="0.6" fill="#C9CCD2"/><rect x="13.5" y="116" width="2" height="1.6" fill="#6F737A"/>
   <rect x="12.5" y="120.2" width="12" height="3.6" rx="0.6" fill="#C9CCD2"/><rect x="13.5" y="121.2" width="2" height="1.6" fill="#6F737A"/>
   <rect x="12.5" y="125.4" width="12" height="3.6" rx="0.6" fill="#C9CCD2"/><rect x="13.5" y="126.4" width="2" height="1.6" fill="#6F737A"/>
  </svg>
  <div class="t" style="left:10px;top:76px;font-style:italic;font-size:19px;line-height:20px;color:#D5D7DC">m</div>
</div>
<div id="status" class="a">
  <div class="a" style="left:1443px;top:0;width:14px;height:26px;background:#1F2023"></div><div class="a" style="left:1401px;top:0;width:43px;height:26px;background:#2D4470"></div>
  <svg width="1" height="1" style="left:0;top:0">
   <rect x="12" y="8" width="7" height="7" rx="1.5" fill="#233B6E" stroke="#548AF7" stroke-width="1.2"/>
   <path d="M88 8 L91.5 11.5 L88 15" fill="none" stroke="#9FA2A8" stroke-width="1.1"/>
   <rect x="102" y="8" width="7" height="7" rx="1.5" fill="#233B6E" stroke="#548AF7" stroke-width="1.2"/>
   <path d="M189 8 L192.5 11.5 L189 15" fill="none" stroke="#9FA2A8" stroke-width="1.1"/>
   <path d="M226 8 L229.5 11.5 L226 15" fill="none" stroke="#9FA2A8" stroke-width="1.1"/>
   <path d="M274 8 L277.5 11.5 L274 15" fill="none" stroke="#9FA2A8" stroke-width="1.1"/>
   <path d="M346 8 L349.5 11.5 L346 15" fill="none" stroke="#9FA2A8" stroke-width="1.1"/>
   <g transform="translate(359.5,4.5)"><path d="M1 12.5 C0 8.5 2 5 5.5 3.5 C8 2.5 10.5 2.5 12.5 0.8 C13.5 4.5 13 8 10.5 10.5 C8 13 4.5 13.8 1 12.5 Z" fill="#2F5A33" stroke="#4E9A57" stroke-width="1"/><path d="M8.6 8.6 A3 3 0 1 0 11.4 8.6" fill="none" stroke="#C9CCD2" stroke-width="1.1"/><line x1="10" y1="7.4" x2="10" y2="10.4" stroke="#C9CCD2" stroke-width="1.1"/></g>
   <!-- copilot -->
   <rect x="1131.3" y="11.6" width="12" height="6" rx="3" fill="none" stroke="#CED0D6" stroke-width="1.2"/>
   <circle cx="1135" cy="10.3" r="2.1" fill="#2B2D30" stroke="#CED0D6" stroke-width="1.2"/><circle cx="1139.4" cy="10.3" r="2.1" fill="#2B2D30" stroke="#CED0D6" stroke-width="1.2"/>
   <path d="M1135.5 13.8 V15.6 M1138.9 13.8 V15.6" stroke="#CED0D6" stroke-width="1.2"/>
   <!-- lock -->
   <rect x="1383" y="11" width="8" height="6.5" rx="1" fill="none" stroke="#CED0D6" stroke-width="1.1"/>
   <path d="M1388 11 V8.5 Q1388 6 1390.5 6 Q1393 6 1393 8.5 V9.5" fill="none" stroke="#CED0D6" stroke-width="1.1"/>
   <!-- 2 spaces icon -->
   <path d="M1356.5 7 H1361 L1363 9 V17 H1356.5 Z" fill="#B9BCC2"/>
   <circle cx="1362.5" cy="15" r="2.3" fill="#2B2D30" stroke="#B9BCC2" stroke-width="1.1"/>
  </svg>
  <div class="t" style="left:23px;top:4px;font-size:12px;color:#A8ABB1">bchtx-plus</div>
  <div class="t" style="left:113px;top:4px;font-size:12px;color:#A8ABB1">bchtx-admin</div>
  <div class="t" style="left:201px;top:4px;font-size:12px;color:#A8ABB1">src</div>
  <div class="t" style="left:238px;top:4px;font-size:12px;color:#A8ABB1">main</div>
  <div class="t" style="left:286px;top:4px;font-size:12px;color:#A8ABB1">resources</div>
  <div class="t" style="left:377px;top:4px;font-size:12px;color:#A8ABB1">application.yml</div>
  <div class="t" style="left:1159px;top:4px;font-size:12px;color:#A8ABB1">255:1</div>
  <div class="t" style="left:1202px;top:3px;font-size:17px;font-weight:bold;color:#F01E28">y</div>
  <div class="t" style="left:1229px;top:4px;font-size:12px;color:#A8ABB1">LF</div>
  <div class="t" style="left:1256px;top:4px;font-size:12px;color:#A8ABB1">UTF-8</div>
  <div class="t" style="left:1305px;top:4px;font-size:12px;color:#A8ABB1">2 spaces</div>
  <div class="t" style="left:1407px;top:4px;font-size:12px;color:#A8ABB1">1857 of 4096M</div>
</div>
</div>
</body></html>
